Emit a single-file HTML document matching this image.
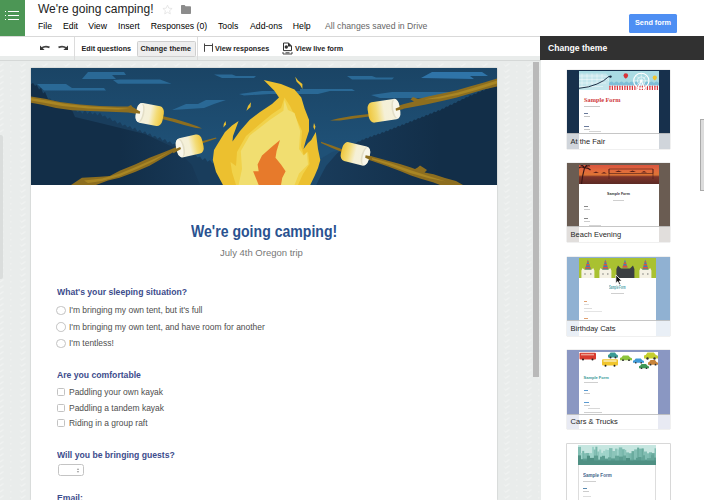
<!DOCTYPE html>
<html lang="en"><head><meta charset="utf-8"><title>We're going camping! - Google Forms</title>
<style>
html,body{margin:0;padding:0}
body{width:704px;height:500px;overflow:hidden;position:relative;background:#fff;font-family:"Liberation Sans",sans-serif}
.a{position:absolute}
.t{position:absolute;white-space:nowrap;line-height:1;transform-origin:0 50%}
.thumb{position:absolute;left:567px;width:102.5px;height:79px;overflow:hidden;box-shadow:0 0 1px rgba(0,0,0,.35)}
.thumb .card{position:absolute;left:11.5px;top:1.5px;width:80px;height:90px;background:#fff}
.thumb .lab{position:absolute;left:0;right:0;bottom:0;height:14.8px;background:rgba(255,255,255,.8);border-top:.5px solid rgba(160,160,160,.6)}
.thumb .ln{position:absolute;height:1px;background:#bbb}
.radio{position:absolute;width:7.6px;height:7.6px;border:.8px solid #c2c2c2;border-radius:50%;background:#fff}
.chk{position:absolute;width:6.2px;height:6.2px;border:.8px solid #c2c2c2;border-radius:1.5px;background:#fff}
</style></head><body>
<div class="a" style="left:0;top:55px;width:541px;height:445px;background:#e9eceb"></div>
<div class="a" style="left:0;top:60px;width:541px;height:1px;background:#d5d8d7"></div>
<svg class="a" style="left:0;top:61px" width="541" height="439"><defs><pattern id="bgp" width="22" height="6" patternUnits="userSpaceOnUse" x="9" y="1"><rect width="22" height="6" fill="#e9eceb"/><path d="M10 1.200 L12.500 3.600 L15 1.600 L17.500 1.400 L15.500 3.200 L12.500 5 Z" fill="#f0f2f1"/><rect x="1" y="3" width="1.600" height="1.600" fill="#eef0ef"/></pattern></defs><rect width="541" height="439" fill="url(#bgp)"/></svg>
<div class="a" style="left:0;top:135px;width:3px;height:144px;background:#dadddc;border-radius:0 2px 2px 0"></div>
<div class="a" style="left:533px;top:62px;width:6px;height:315px;background:#b9b9b9"></div>
<div class="a" style="left:31px;top:68px;width:466px;height:432px;background:#fff;box-shadow:0 0 1.5px rgba(0,0,0,.25)"></div>
<svg class="a" style="left:31px;top:68px" width="466" height="117" viewBox="31 68 466 117" preserveAspectRatio="none">
<defs>
<linearGradient id="sky" x1="0" y1="0" x2="0" y2="1"><stop offset="0" stop-color="#1a4465"/><stop offset=".7" stop-color="#1f5177"/><stop offset="1" stop-color="#1f5177"/></linearGradient>
<linearGradient id="mw" x1="0" y1="0" x2="1" y2="0"><stop offset="0" stop-color="#f4f1de"/><stop offset=".5" stop-color="#f5f0d6"/><stop offset=".74" stop-color="#f3dc78"/><stop offset="1" stop-color="#efc63c"/></linearGradient>
<linearGradient id="mwr" x1="1" y1="0" x2="0" y2="0"><stop offset="0" stop-color="#f4f1de"/><stop offset=".5" stop-color="#f5f0d6"/><stop offset=".74" stop-color="#f3dc78"/><stop offset="1" stop-color="#efc63c"/></linearGradient>
<linearGradient id="rm" gradientUnits="userSpaceOnUse" x1="320" y1="0" x2="440" y2="0"><stop offset="0" stop-color="#193b5a"/><stop offset="1" stop-color="#122e48"/></linearGradient>
<linearGradient id="lm" gradientUnits="userSpaceOnUse" x1="120" y1="0" x2="215" y2="0"><stop offset="0" stop-color="#122e48"/><stop offset="1" stop-color="#193b5a"/></linearGradient>
</defs>
<rect x="31" y="68" width="466" height="117" fill="url(#sky)"/>
<!-- clouds -->
<g fill="#2a6996">
<path d="M82 79 L88 72 H124 L126 75 H112 L116 79 Z"/>
<path d="M113 80 L120 79.500 H160 L171.500 83.700 H118 Z"/>
<path d="M37 84 H66 L72 88 H104 L106 90.500 H44 Z"/>
<path d="M214 74.500 H232 L236 76 H256 L254 78 H222 Z"/>
<path d="M172 110 L186 104 H198 L206 100 H226 L214 104 L204 108 Z"/>
<path d="M239 94 L262 91 H310 L312 94 H270 L244 95.500 Z"/>
<path d="M347 76 H372 L376 77.500 H394 L392 79.500 H352 Z"/>
<path d="M421 78 L432 72 H482 L488 76 H470 L474 79 Z" fill="#2f74a8"/>
<path d="M300 89 H352 L355 91 H330 L318 94 H300 Z"/>
<path d="M371 95 L392 92 H452 L459 95 L440 98 H380 Z"/>
<path d="M140 108 L150 104 H176 L168 108 Z" opacity=".0"/>
</g>
<!-- lighter horizon band under stick (left) -->

<!-- mid mountains left with tree line -->
<path d="M31 84.300 L33 83 L35 86 L36.700 85 L39 89.500 L41 88 L43 93.500 L45 92 L48 99 L50.0 98.2 L52.5 101.4 L55.0 100.0 L57.5 103.5 L60.0 102.2 L62.5 105.6 L65.0 104.3 L67.5 107.9 L70.0 106.6 L72.5 110.2 L75.0 109.3 L77.5 112.3 L80.0 110.7 L82.5 113.7 L85.0 110.1 L87.5 113.9 L90.0 111.3 L92.5 114.5 L95.0 112.3 L97.5 115.6 L100.0 112.6 L102.5 116.6 L105.0 115.5 L107.5 119.0 L110.0 117.5 L112.5 121.3 L115.0 120.2 L117.5 123.7 L120.0 122.1 L122.5 125.7 L125.0 124.5 L127.5 127.6 L130.0 125.9 L132.5 129.5 L135.0 127.5 L137.5 131.4 L140.0 129.7 L142.5 133.2 L145.0 131.3 L147.5 135.1 L150.0 133.3 L152.5 136.9 L155.0 135.7 L157.5 138.8 L160.0 137.0 L162.5 140.7 L165.0 139.1 L167.5 142.7 L170.0 141.3 L172.5 144.6 L175.0 143.6 L177.5 146.6 L180.0 145.5 L182.5 149.3 L185.0 148.6 L187.5 152.0 L190.0 151.0 L192.5 154.8 L195.0 153.6 L197.5 157.5 L200.0 156.5 L202.5 160.2 L205.0 157.9 L207.5 161.8 L210.0 160.0 L212.5 163.4 L215.0 162.0 L217.5 165.8 L220.0 166.5 L222.5 169.9 L226 185 L31 185 Z" fill="#193d5c"/>
<!-- dark front mountain left -->
<path d="M31 84.300 L33 83 L35 86 L36.700 85 L39 89.500 L41 88 L43 93.500 L45 92 L48 99 L72 110 L75 117 L100 123 L145 134 L175 148 L192 165 L200 185 L31 185 Z" fill="url(#lm)"/>
<!-- right dark mountain -->
<path d="M497 85 L494.0 85.2 L492.0 87.4 L490.0 86.9 L488.0 89.1 L486.0 88.5 L484.0 90.7 L482.0 90.1 L480.0 92.3 L478.0 91.7 L476.0 93.9 L474.0 93.4 L472.0 95.6 L470.0 95.0 L468.0 97.2 L466.0 96.9 L464.0 99.1 L462.0 98.9 L460.0 101.1 L458.0 100.8 L456.0 103.0 L454.0 102.7 L452.0 104.9 L450.0 104.6 L448.0 106.8 L446.0 106.6 L444.0 108.8 L442.0 108.5 L440.0 110.7 L438.0 110.1 L436.0 112.3 L434.0 111.6 L432.0 113.8 L430.0 113.2 L428.0 115.4 L426.0 114.8 L424.0 117.0 L422.0 116.4 L420.0 118.6 L418.0 117.9 L416.0 120.1 L414.0 119.5 L412.0 121.7 L410.0 121.1 L408.0 123.3 L406.0 122.7 L404.0 124.9 L402.0 124.3 L400.0 126.5 L398.0 125.8 L396.0 128.0 L394.0 127.4 L392.0 129.6 L390.0 129.0 L388.0 131.2 L386.0 130.6 L384.0 132.8 L382.0 132.1 L380.0 134.2 L378.0 133.4 L376.0 135.6 L374.0 134.8 L372.0 137.0 L370.0 136.2 L368.0 138.4 L366.0 137.7 L364.0 139.8 L362.0 139.4 L360.0 141.6 L358.0 141.3 L356.0 143.5 L354.0 143.1 L352.0 145.3 L350.0 145.0 L348.0 147.2 L346.0 147.0 L344.0 149.2 L342.0 149.0 L340.0 151.2 L340 151 L332 157 L326 165 L320 176 L316 185 L497 185 Z" fill="url(#rm)"/>
<path d="M300 185 L306 170 L322 158 L332 152 L340 150 L326 166 L316 185 Z" fill="#1d4a6e"/>

<!-- stick 1 (upper-left) -->
<path d="M31 96.500 L45 98.800 L60 102 L80 104.500 L100 106 L118 106.500 L128 106.500 L131 105 L132.500 107 L138 110.500 L138 114 L128 112.500 L110 111.800 L90 111 L72 110.200 L56 108 L42 104.800 L31 102.800 Z" fill="#8d6e1f"/>
<path d="M31 98 L48 100.800 L66 104 L90 106.500 L118 108 L130 108.800 L118 109.500 L88 108.500 L62 106 L44 102.800 L31 100.500 Z" fill="#a98624"/>
<path d="M160 115.500 L175 119 L188 123 L198 126.500 L202 128.500 L196 128 L184 125 L172 121.500 L160 118.500 Z" fill="#8d6e1f"/>
<!-- marshmallow 1 -->
<g transform="rotate(11 149.7 114.5)"><rect x="135.9" y="104.5" width="27.5" height="20" rx="5" ry="6.500" fill="url(#mw)"/><ellipse cx="140.9" cy="114.5" rx="3.200" ry="9.2" fill="#d6d0b8" opacity=".55"/><ellipse cx="139.3" cy="114.5" rx="3.200" ry="9.4" fill="#f8f6ea"/></g>

<!-- stick 2 (lower-left) -->
<path d="M71 185 L81.900 177.700 L100 176.800 L109.700 176 L119.600 170.800 L135 164.500 L149.500 157.800 L163 152.500 L175.300 147.500 L181 145.500 L182 148.500 L175.300 151 L163 158 L149.500 165.800 L135 172 L119.600 177.700 L108 180.500 L96 185 Z" fill="#8d6e1f"/>
<path d="M84 180.500 L102 178.500 L120 173.500 L138 166 L154 159 L170 151.500 L154 161 L138 168.500 L120 176 L102 181 L88 183 Z" fill="#a98624"/>
<path d="M201 141.500 L216 137.500 L216.500 138.500 L202 143.500 Z" fill="#8d6e1f"/>
<!-- marshmallow 2 -->
<g transform="rotate(-13 189.6 145.9)"><rect x="176.1" y="136.2" width="27" height="19.5" rx="5" ry="6.500" fill="url(#mw)"/><ellipse cx="181.1" cy="145.9" rx="3.200" ry="8.9" fill="#d6d0b8" opacity=".55"/><ellipse cx="179.5" cy="145.9" rx="3.200" ry="9.2" fill="#f8f6ea"/></g>

<!-- flame -->
<path d="M223 185 L216 172 L212.800 160 L214 150 L217.300 144.400 L225 132 L232 125.500 L238.600 120.900 L236 128 L233 136 L232.500 141.500 L240 131 L249.800 119.800 L260 112 L272 104 L279 97.400 L274.400 90.700 L263.700 80 L281 84 L294.500 89.500 L301.300 97.400 L304.600 108.600 L309 119.800 L309 131 L306 140 L303.500 149 L308 143 L311.300 140 L315.800 132 L318 149 L320.300 160 L318 168 L314.700 175.700 L310.200 185 Z" fill="#ecc02f"/>
<path d="M236 185 L232 172 L230.500 162 L236 166 L237 152 L246 136 L260 124 L272 114 L281 108 L284.500 97.400 L290 106 L296 118 L302 131 L301 146 L304 156 L308 151.500 L309.500 164 L303 174 L298 185 Z" fill="#f1d24a"/>
<path d="M238.600 185 L242 169 L240.800 151 L249.800 135.400 L270 119.800 L283.400 110.800 L284.500 100 L288 110 L294.500 113 L300.200 131 L299 149 L303.500 155.600 L306.900 152.200 L308 164.500 L299 173.500 L294.500 185 Z" fill="#f1de70"/>
<path d="M258.700 185 L253.100 171.300 L258.700 171.300 L257.600 164.500 L262 155.600 L272.200 146.600 L280 140 L276.600 151 L275.500 157.800 L281 164.500 L285.600 171.300 L282.200 178 L281 185 Z" fill="#e77a2b"/>
<!-- sparks -->
<path d="M295.200 76.800 L298 80.500 L302.400 84 L302.400 89 L300 85 L296.500 81.500 Z" fill="#ecc02f"/>
<path d="M250.900 102.300 L250.600 107 L246.400 110.800 L248 106 Z" fill="#ecc02f"/>
<path d="M225.600 120.900 L226 124.500 L223.400 127.600 L223.800 124 Z" fill="#ecc02f"/>
<path d="M314 123 L315.400 126.500 L314.700 130 L313.300 127 Z" fill="#ecc02f"/>

<!-- stick 3 (upper-right) -->
<path d="M497 78.500 L484 82.500 L470.500 86.300 L456 90.500 L442 93.400 L428 96.500 L418 99 L413 97 L410.500 99.500 L414 101.500 L404 104 L396 106.500 L396.500 110 L410 107.500 L426 104.500 L442 101 L456 97.800 L470.500 93.600 L484 89.500 L497 86.500 Z" fill="#8d6e1f"/>
<path d="M497 80.500 L478 86.500 L458 92.500 L440 96.500 L424 99.500 L440 98.500 L458 95 L478 89.500 L497 83.500 Z" fill="#a98624"/>
<path d="M369 114 L352 116 L338 118.500 L330 120.500 L340 120.500 L354 118.500 L369 116.500 Z" fill="#8d6e1f"/>
<!-- marshmallow 3 -->
<g transform="rotate(-9 384 110.7)"><rect x="368.0" y="100.5" width="32" height="20.5" rx="5" ry="6.500" fill="url(#mwr)"/><ellipse cx="395.0" cy="110.7" rx="3.200" ry="9.4" fill="#d6d0b8" opacity=".55"/><ellipse cx="396.6" cy="110.7" rx="3.200" ry="9.7" fill="#f8f6ea"/></g>

<!-- stick 4 (lower-right) -->
<path d="M321 141.800 L332 145.500 L343 149.500 L343 152.500 L332 148 L321 143 Z" fill="#8d6e1f"/>
<path d="M368.900 155.500 L388 160.700 L400 164 L411 167.500 L415 169 L417.700 167.500 L420 165.500 L424 168 L427 170 L424.500 172.500 L433.600 174.300 L445 178 L456 181 L463 185 L440 185 L433.600 182.500 L420 178.500 L411 175.500 L400 171 L388 166.400 L378 163 L368 159.500 Z" fill="#8d6e1f"/>
<path d="M372 158 L390 163 L410 170 L430 176.500 L446 181.500 L430 178.500 L410 173 L390 165.500 L372 159.500 Z" fill="#a98624"/>
<!-- marshmallow 4 -->
<g transform="rotate(14 355.5 153.8)"><rect x="341.2" y="144.1" width="28.5" height="19.5" rx="5" ry="6.500" fill="url(#mwr)"/><ellipse cx="364.8" cy="153.8" rx="3.200" ry="8.9" fill="#d6d0b8" opacity=".55"/><ellipse cx="366.4" cy="153.8" rx="3.200" ry="9.2" fill="#f8f6ea"/></g>
<!-- stick ends over caps -->
<g fill="#8d6e1f">
<path d="M395.600 108.400 L403 105.600 L403.500 109 L396 110.800 Z"/>
<path d="M365.600 155.200 L372 156.600 L371.500 160.400 L365.200 157.800 Z"/>
<path d="M131 106.500 L140.200 111.600 L139.800 113.800 L131 112.500 Z"/>
<path d="M172 150.500 L180.200 146.900 L181 149 L173.500 153.200 Z"/>
</g>
</svg>
<div class="t" style="left:191px;top:223.41px;font-size:17px;color:#2a5290;font-weight:bold;transform:scaleX(0.828);">We're going camping!</div>
<div class="t" style="left:220px;top:248.17px;font-size:9.6px;color:#777;transform:scaleX(0.99);">July 4th Oregon trip</div>
<div class="t" style="left:57px;top:287.46px;font-size:9.5px;color:#3c4c8c;font-weight:bold;transform:scaleX(0.908);">What's your sleeping situation?</div>
<div class="radio" style="left:56.4px;top:305.6px"></div>
<div class="t" style="left:69px;top:306.18px;font-size:9px;color:#4e4e4e;transform:scaleX(0.94);">I'm bringing my own tent, but it's full</div>
<div class="radio" style="left:56.4px;top:322.3px"></div>
<div class="t" style="left:69px;top:323.18px;font-size:9px;color:#4e4e4e;transform:scaleX(0.94);">I'm bringing my own tent, and have room for another</div>
<div class="radio" style="left:56.4px;top:338.5px"></div>
<div class="t" style="left:69px;top:338.58px;font-size:9px;color:#4e4e4e;transform:scaleX(0.94);">I'm tentless!</div>
<div class="t" style="left:57px;top:369.66px;font-size:9.5px;color:#3c4c8c;font-weight:bold;transform:scaleX(0.908);">Are you comfortable</div>
<div class="chk" style="left:56.7px;top:388.0px"></div>
<div class="t" style="left:68.6px;top:388.08px;font-size:9px;color:#4e4e4e;transform:scaleX(0.94);">Paddling your own kayak</div>
<div class="chk" style="left:56.7px;top:404.0px"></div>
<div class="t" style="left:68.6px;top:404.08px;font-size:9px;color:#4e4e4e;transform:scaleX(0.94);">Paddling a tandem kayak</div>
<div class="chk" style="left:56.7px;top:419.2px"></div>
<div class="t" style="left:68.6px;top:419.28px;font-size:9px;color:#4e4e4e;transform:scaleX(0.94);">Riding in a group raft</div>
<div class="t" style="left:57px;top:450.16px;font-size:9.5px;color:#3c4c8c;font-weight:bold;transform:scaleX(0.908);">Will you be bringing guests?</div>
<div class="a" style="left:57.7px;top:464.2px;width:24.6px;height:9.4px;border:.8px solid #c4c4c4;border-radius:2.5px;background:#fff"></div>
<svg class="a" style="left:76px;top:466.6px" width="4" height="7" viewBox="0 0 4 7"><path d="M0.800 2.700 L2 1.300 L3.200 2.700 Z M0.800 4.300 L2 5.700 L3.200 4.300 Z" fill="#8a8a8a"/></svg>
<div class="t" style="left:57px;top:493.46px;font-size:9.5px;color:#3c4c8c;font-weight:bold;transform:scaleX(0.908);">Email:</div>
<div class="a" style="left:0;top:0;width:704px;height:36px;background:#fff"></div>
<div class="a" style="left:0;top:0;width:25px;height:36px;background:#4c9655"></div>
<svg class="a" style="left:4px;top:9px" width="16" height="12" viewBox="0 0 16 12"><g fill="#fff"><rect x="1" y="2" width="1" height="1"/><rect x="4" y="2" width="11" height="1"/><rect x="1" y="6" width="1" height="1"/><rect x="4" y="6" width="11" height="1"/><rect x="1" y="10" width="1" height="1"/><rect x="4" y="10" width="11" height="1"/></g></svg>
<div class="t" style="left:38px;top:3.14px;font-size:12px;color:#222;">We're going camping!</div>
<svg class="a" style="left:162px;top:4px" width="11" height="11" viewBox="0 0 24 24"><path d="M12 2.5l2.9 6.6 7.1.7-5.4 4.8 1.6 7-6.2-3.7-6.2 3.7 1.6-7L2 9.800l7.100-.7z" fill="#fff" stroke="#e2e2e2" stroke-width="1.700"/></svg>
<svg class="a" style="left:181px;top:5px" width="10" height="9" viewBox="0 0 10 9"><path d="M0 0.800 Q0 0 0.800 0 H3.600 L4.600 1.200 H9.200 Q10 1.200 10 2 V8.200 Q10 9 9.200 9 H0.800 Q0 9 0 8.200 Z" fill="#8c8c8c"/></svg>
<div class="t" style="left:38px;top:21.74px;font-size:8.7px;color:#000;">File</div>
<div class="t" style="left:63px;top:21.74px;font-size:8.7px;color:#000;">Edit</div>
<div class="t" style="left:88.3px;top:21.74px;font-size:8.7px;color:#000;">View</div>
<div class="t" style="left:118px;top:21.74px;font-size:8.7px;color:#000;">Insert</div>
<div class="t" style="left:150.7px;top:21.74px;font-size:8.7px;color:#000;">Responses (0)</div>
<div class="t" style="left:218px;top:21.74px;font-size:8.7px;color:#000;">Tools</div>
<div class="t" style="left:250px;top:21.74px;font-size:8.7px;color:#000;">Add-ons</div>
<div class="t" style="left:292.8px;top:21.74px;font-size:8.7px;color:#000;">Help</div>
<div class="t" style="left:325px;top:21.74px;font-size:8.7px;color:#666;">All changes saved in Drive</div>
<div class="a" style="left:629px;top:14px;width:47.5px;height:18.5px;background:#4e8ff3;border-radius:1.5px"></div>
<div class="t" style="left:635px;top:19.42px;font-size:7.3px;color:#fff;font-weight:bold;">Send form</div>
<div class="a" style="left:0;top:36px;width:541px;height:1px;background:#d9d9d9"></div>
<div class="a" style="left:0;top:37px;width:541px;height:18.5px;background:#fff"></div>
<div class="a" style="left:74px;top:37px;width:1px;height:23px;background:#dcdcdc"></div>
<div class="a" style="left:197px;top:37px;width:1px;height:23px;background:#dcdcdc"></div>
<svg class="a" style="left:38px;top:44px" width="32" height="8" viewBox="0 0 32 8"><path d="M2 1.600 V6 H6.600 Z" fill="#333"/><path d="M3.500 4.200 Q7 1.400 11.500 3.400" fill="none" stroke="#444" stroke-width="1.700"/><path d="M30 1.600 V6 H25.400 Z" fill="#333"/><path d="M28.500 4.200 Q25 1.400 20.500 3.400" fill="none" stroke="#444" stroke-width="1.700"/></svg>
<div class="t" style="left:81.5px;top:44.51px;font-size:7.2px;color:#222;font-weight:bold;">Edit questions</div>
<div class="a" style="left:137px;top:40.5px;width:56.5px;height:14.2px;background:#eee;border:.8px solid #cfcfcf;border-radius:1.5px"></div>
<div class="t" style="left:140.5px;top:44.51px;font-size:7.2px;color:#222;font-weight:bold;letter-spacing:.08px;">Change theme</div>
<svg class="a" style="left:203px;top:43px" width="11" height="10" viewBox="0 0 11 10"><path d="M1.500 0.500 V8.800 M9.500 0.500 V8.800 M1.500 2.500 H9.500" fill="none" stroke="#444" stroke-width="1"/></svg>
<div class="t" style="left:215px;top:44.51px;font-size:7.2px;color:#222;font-weight:bold;">View responses</div>
<svg class="a" style="left:282px;top:41.5px" width="11" height="13" viewBox="0 0 11 13"><path d="M1.500 1 H6.500 L9.500 4 V8.600 H1.500 Z" fill="#fff" stroke="#333" stroke-width="1"/><path d="M6 0.500 L10 4.500 H6 Z" fill="#333"/><circle cx="4.300" cy="5" r="1.700" fill="#333"/><path d="M1 10 V12 H10 V10" fill="none" stroke="#333" stroke-width=".9"/><rect x="3.500" y="10.200" width="4" height="1.200" fill="#555"/></svg>
<div class="t" style="left:295px;top:44.51px;font-size:7.2px;color:#222;font-weight:bold;">View live form</div>
<div class="a" style="left:540.500px;top:36px;width:163.500px;height:464px;background:#fff"></div>
<div class="a" style="left:540px;top:36px;width:164px;height:23.600px;background:#313131"></div>
<div class="t" style="left:548px;top:43.72px;font-size:8.6px;color:#fff;font-weight:bold;">Change theme</div>
<div class="a" style="left:700px;top:119px;width:4px;height:71.500px;background:#dcdcdc;border:.6px solid #aaa;border-right:0;box-sizing:border-box"></div>
<div class="thumb" style="top:69.6px;background:#17304c">
<div class="card" style="top:1.4px"></div>
<svg class="a" style="left:11.5px;top:1.4px" width="80" height="19.5" viewBox="0 0 80 19.500">
<rect width="80" height="19.500" fill="#a9dbe3"/>
<path d="M0 2.500 H27 L30 5.500 V19.500 H0 Z" fill="#fff" opacity=".32"/>
<g fill="none" stroke="#fff" stroke-width=".5" opacity=".85"><path d="M0 5 H24 Q29.500 5 29.500 10 M3 2.500 V17 M8 2.500 V17 M13 2.500 V16 M18 2.500 V14 M23 3 V12 M0 8.500 H28 M0 12 H27 M0 15.500 H24"/></g>
<path d="M0 17.300 Q10 16.500 18 13 Q26 9.500 28.500 6.500 Q30 4.500 31.500 6" fill="none" stroke="#1d2f45" stroke-width="1"/>
<circle cx="31.500" cy="5.600" r="1.200" fill="#1d2f45"/>
<path d="M30 12 q2.500 -3 5 0 q2.500 -3 5 0 q2.500 -3 5 0 q2.500 -3 5 0 q2.500 -3 5 0 q2.500 -3 5 0 q2.500 -3 5 0 q2.500 -3 5 0 q2.500 -3 5 0 q2.500 -3 5 0 V15 H30 Z" fill="#7fbfd8"/>
<rect x="30" y="14.500" width="50" height="5" fill="#fff"/>
<g fill="#d8343a"><path d="M30.3 19.500 V15.200 L30.9 14.200 L31.5 15.200 V19.500 Z"/><path d="M32.8 19.500 V15.200 L33.4 14.200 L34.0 15.200 V19.500 Z"/><path d="M35.3 19.500 V15.200 L35.9 14.200 L36.5 15.200 V19.500 Z"/><path d="M37.8 19.500 V15.200 L38.4 14.200 L39.0 15.200 V19.500 Z"/><path d="M40.3 19.500 V15.200 L40.9 14.200 L41.5 15.200 V19.500 Z"/><path d="M42.8 19.500 V15.200 L43.4 14.200 L44.0 15.200 V19.500 Z"/><path d="M45.3 19.500 V15.200 L45.9 14.200 L46.5 15.200 V19.500 Z"/><path d="M47.8 19.500 V15.200 L48.4 14.200 L49.0 15.200 V19.500 Z"/><path d="M50.3 19.500 V15.200 L50.9 14.200 L51.5 15.200 V19.500 Z"/><path d="M52.8 19.500 V15.200 L53.4 14.200 L54.0 15.200 V19.500 Z"/><path d="M55.3 19.500 V15.200 L55.9 14.200 L56.5 15.200 V19.500 Z"/><path d="M57.8 19.500 V15.200 L58.4 14.200 L59.0 15.200 V19.500 Z"/><path d="M60.3 19.500 V15.200 L60.9 14.200 L61.5 15.200 V19.500 Z"/><path d="M62.8 19.500 V15.200 L63.4 14.200 L64.0 15.200 V19.500 Z"/><path d="M65.3 19.500 V15.200 L65.9 14.200 L66.5 15.200 V19.500 Z"/><path d="M67.8 19.500 V15.200 L68.4 14.200 L69.0 15.200 V19.500 Z"/><path d="M70.3 19.500 V15.200 L70.9 14.200 L71.5 15.200 V19.500 Z"/><path d="M72.8 19.500 V15.200 L73.4 14.200 L74.0 15.200 V19.500 Z"/><path d="M75.3 19.500 V15.200 L75.9 14.200 L76.5 15.200 V19.500 Z"/><path d="M77.8 19.500 V15.200 L78.4 14.200 L79.0 15.200 V19.500 Z"/></g>
<g fill="none" stroke="#fff"><circle cx="62.300" cy="9.800" r="7.600" stroke-width="1.100"/><circle cx="62.300" cy="9.800" r="4" stroke-width=".6"/><path d="M54.700 9.800 H69.900 M62.300 2.200 V17.400 M56.900 4.400 L67.700 15.200 M67.700 4.400 L56.900 15.200" stroke-width=".45"/><path d="M62.300 9.800 L58 19.500 M62.300 9.800 L66.600 19.500" stroke-width="1.100"/></g><circle cx="62.300" cy="9.800" r="1.300" fill="#fff"/>
<path d="M44.500 4.500 a2.300 2.300 0 1 1 4.600 0 q0 1.800 -2.300 3.200 q-2.300 -1.400 -2.300 -3.200 Z" fill="#d8343a"/><path d="M73.700 6.500 a2.100 2.100 0 1 1 4.200 0 q0 1.700 -2.100 3 q-2.100 -1.300 -2.100 -3 Z" fill="#efc52f"/>
</svg>
<div class="t" style="left:17px;top:26.97px;font-size:6.3px;font-weight:bold;color:#cf3a3c;font-family:'Liberation Serif',serif">Sample Form</div>
<div class="ln" style="left:17px;top:36px;width:16px;background:#c8c8c8"></div><div class="ln" style="left:17px;top:43.5px;width:4px;background:#6a7a9a"></div><div class="ln" style="left:17px;top:46.5px;width:6px;background:#c4c4c4"></div><div class="ln" style="left:17px;top:56px;width:5px;background:#6a7a9a"></div><div class="ln" style="left:17px;top:59px;width:6px;background:#c4c4c4"></div><div class="ln" style="left:22px;top:61.5px;width:12px;background:#d4d4d4"></div>
<div class="lab"></div><div class="t" style="left:3.6px;top:68.05px;font-size:7.5px;color:#262626">At the Fair</div>
</div>
<div class="thumb" style="top:163px;background:#6a5c52">
<div class="card" style="top:1.5px"></div>
<svg class="a" style="left:11.5px;top:1.5px" width="80" height="19" viewBox="0 0 80 19">
<defs><linearGradient id="be" x1="0" y1="0" x2="0" y2="1"><stop offset="0" stop-color="#d9553f"/><stop offset=".3" stop-color="#e26a3c"/><stop offset=".52" stop-color="#dc7434"/><stop offset=".62" stop-color="#7c3329"/><stop offset="1" stop-color="#5c2a25"/></linearGradient></defs>
<rect width="80" height="19" fill="url(#be)"/>

<g stroke="#4a1c18" stroke-width=".6" fill="none"><path d="M30 4 H74 V8.500 H30 Z M30 4 V14 M74 4 V14"/></g>
<path d="M2.500 19 Q3.500 10 5.500 3 M5.500 3 Q2 1 0 3 M5.500 3 Q4 0 1.500 0 M5.500 3 Q8 0 11 1 M5.500 3 Q9 2.500 11.500 5 M5.500 3 Q6.500 1 8 0" stroke="#3a1614" stroke-width="1.100" fill="none"/>
<g fill="#5e211a"><path d="M14 8 l3 -1.500 l3 1.500 Z M22 8.500 l3 -1.500 l3 1.500 Z M36 7 l3.500 -1.500 l3.500 1.500 Z M50 7 l3.500 -1.500 l3.500 1.500 Z M62 7.500 l3 -1.500 l3 1.500 Z"/></g>
</svg>
<div class="t" style="left:11.5px;width:80px;text-align:center;top:29.95px;font-size:3.6px;font-weight:bold;color:#333">Sample Form</div>
<div class="ln" style="left:46px;top:36.5px;width:11px;background:#cfcfcf"></div><div class="ln" style="left:17px;top:42.5px;width:4px;background:#888"></div><div class="ln" style="left:17px;top:45.5px;width:6px;background:#ccc"></div><div class="ln" style="left:17px;top:55px;width:4px;background:#888"></div><div class="ln" style="left:17px;top:58px;width:6px;background:#ccc"></div><div class="ln" style="left:22px;top:61.5px;width:12px;background:#d4d4d4"></div>
<div class="lab"></div><div class="t" style="left:3.6px;top:68.05px;font-size:7.5px;color:#262626">Beach Evening</div>
</div>
<div class="thumb" style="top:257px;background:#90b1d2">
<div class="card" style="top:1px;left:11.600px;width:77.700px"></div>
<svg class="a" style="left:11.600px;top:1px" width="77.700" height="20" viewBox="0 0 77.700 20">
<rect width="77.700" height="20" fill="#a9c131"/>
<path d="M2.4 20 V12.500 L3.5999999999999996 10 L5.4 11.800 H12.4 L14.200000000000001 10 L15.4 12.500 V20 Z" fill="#f4f1e4"/><path d="M5.9 11.500 L8.9 1.500 L11.9 11.500 Z" fill="#3f7fb8"/><path d="M6.6000000000000005 9 H11.2 L11.7 10.600 H6.1000000000000005 Z M7.4 6 H10.4 L10.8 7.500 H7.0 Z M8.200000000000001 3.300 H9.6 L9.9 4.500 H7.9 Z" fill="#e2543a"/><rect x="5.4" y="15.500" width="1.200" height="1" fill="#555"/><rect x="11.2" y="15.500" width="1.200" height="1" fill="#555"/><path d="M20.4 20 V12.500 L21.599999999999998 10 L23.4 11.800 H29.4 L31.2 10 L32.4 12.500 V20 Z" fill="#f4f1e4"/><path d="M23.4 11.500 L26.4 1.500 L29.4 11.500 Z" fill="#3f7fb8"/><path d="M24.099999999999998 9 H28.7 L29.2 10.600 H23.599999999999998 Z M24.9 6 H27.9 L28.299999999999997 7.500 H24.5 Z M25.7 3.300 H27.099999999999998 L27.4 4.500 H25.4 Z" fill="#e2543a"/><rect x="23.4" y="15.500" width="1.200" height="1" fill="#555"/><rect x="28.2" y="15.500" width="1.200" height="1" fill="#555"/><path d="M60.4 20 V12.500 L61.6 10 L63.4 11.800 H69.4 L71.2 10 L72.4 12.500 V20 Z" fill="#f4f1e4"/><path d="M63.400000000000006 11.500 L66.4 1.500 L69.4 11.500 Z" fill="#3f7fb8"/><path d="M64.10000000000001 9 H68.7 L69.2 10.600 H63.60000000000001 Z M64.9 6 H67.9 L68.30000000000001 7.500 H64.5 Z M65.7 3.300 H67.10000000000001 L67.4 4.500 H65.4 Z" fill="#e2543a"/><rect x="63.4" y="15.500" width="1.200" height="1" fill="#555"/><rect x="68.2" y="15.500" width="1.200" height="1" fill="#555"/>
<path d="M37.400 20 V11 L39 7.500 L42 10.500 H51 L54 7.500 L55.400 11 V20 Z" fill="#3b3f42"/>
<path d="M43.500 9.500 L46 1.500 L48.500 9.500 Z" fill="#3f7fb8"/><path d="M44 7.500 H48 L48.500 9.500 H43.500 Z M45 4.500 H47 L47.400 6 H44.600 Z" fill="#e2543a"/>
</svg>
<div class="t" style="left:41.500px;top:28.06px;font-size:5.600px;color:#4aa0a8;transform:scaleX(.47);font-weight:bold">Sample Form</div>
<div class="ln" style="left:43.5px;top:35.5px;width:13px;background:#cfcfcf"></div><div class="ln" style="left:17px;top:44px;width:3px;background:#e0a070"></div><div class="ln" style="left:17px;top:47px;width:5px;background:#ddd"></div><div class="ln" style="left:17px;top:50.5px;width:8px;background:#ddd"></div><div class="ln" style="left:17px;top:54px;width:18px;background:#e4e4e4"></div><div class="ln" style="left:17px;top:61px;width:4px;background:#e0a070"></div>
<div class="lab"></div><div class="t" style="left:3.6px;top:68.05px;font-size:7.5px;color:#262626">Birthday Cats</div>
</div>
<div class="thumb" style="top:350.300px;background:#8a97c2">
<div class="card" style="top:1.500px;left:11.700px;width:79px"></div>
<svg class="a" style="left:11.700px;top:1.500px" width="79" height="17" viewBox="0 0 79 17">
<rect x="0.500" y="0.800" width="16.500" height="6.600" rx="1" fill="#d83a2e"/><circle cx="4" cy="7.600" r="1" fill="#222"/><circle cx="13.500" cy="7.600" r="1" fill="#222"/><rect x="2" y="1.800" width="13" height="1.600" fill="#f4c8b8" opacity=".7"/>
<rect x="23" y="7.200" width="16" height="6.400" rx="1" fill="#f0c52d"/><circle cx="26.500" cy="13.800" r="1" fill="#222"/><circle cx="35.500" cy="13.800" r="1" fill="#222"/><rect x="24.500" y="8.200" width="13" height="1.600" fill="#fff" opacity=".6"/>
<path d="M29 3.2 Q29 2.5999999999999996 30.2 2.5999999999999996 L31.5 0.5 H36.0 L37.5 2.5999999999999996 Q39 2.9000000000000004 39 3.8000000000000003 V5.6 H29 Z" fill="#3a9a94"/><circle cx="31.5" cy="5.6" r="1.02" fill="#333"/><circle cx="36.5" cy="5.6" r="1.02" fill="#333"/><path d="M41 5.975 Q41 5.425 42.44 5.425 L44.0 3.5 H49.4 L51.2 5.425 Q53 5.7 53 6.525 V8.175 H41 Z" fill="#8cc43c"/><circle cx="44.0" cy="8.175" r="0.935" fill="#333"/><circle cx="50.0" cy="8.175" r="0.935" fill="#333"/><path d="M54 8.75 Q54 8.25 55.32 8.25 L56.75 6.5 H61.7 L63.35 8.25 Q65 8.5 65 9.25 V10.75 H54 Z" fill="#3e9ad6"/><circle cx="56.75" cy="10.75" r="0.8500000000000001" fill="#333"/><circle cx="62.25" cy="10.75" r="0.8500000000000001" fill="#333"/><path d="M65 3.65 Q65 2.9499999999999997 66.68 2.9499999999999997 L68.5 0.5 H74.8 L76.9 2.9499999999999997 Q79 3.3000000000000003 79 4.3500000000000005 V6.45 H65 Z" fill="#c5cf2e"/><circle cx="68.5" cy="6.45" r="1.1900000000000002" fill="#333"/><circle cx="75.5" cy="6.45" r="1.1900000000000002" fill="#333"/><path d="M69 10.475 Q69 9.925 70.2 9.925 L71.5 8 H76.0 L77.5 9.925 Q79 10.2 79 11.025 V12.675 H69 Z" fill="#c8843a"/><circle cx="71.5" cy="12.675" r="0.935" fill="#333"/><circle cx="76.5" cy="12.675" r="0.935" fill="#333"/><path d="M60 14.25 Q60 13.75 61.2 13.75 L62.5 12 H67.0 L68.5 13.75 Q70 14.0 70 14.75 V16.25 H60 Z" fill="#3f9a56"/><circle cx="62.5" cy="16.25" r="0.8500000000000001" fill="#333"/><circle cx="67.5" cy="16.25" r="0.8500000000000001" fill="#333"/>
</svg>
<div class="t" style="left:16.500px;top:25.21px;font-size:4px;font-weight:bold;color:#3a9a9a">Sample Form</div>
<div class="ln" style="left:16.5px;top:32px;width:14px;background:#cfcfcf"></div><div class="ln" style="left:16.5px;top:39.5px;width:4px;background:#5a9ad0"></div><div class="ln" style="left:16.5px;top:42.5px;width:6px;background:#ccc"></div><div class="ln" style="left:16.5px;top:51.5px;width:5px;background:#5a9ad0"></div><div class="ln" style="left:16.5px;top:54.5px;width:6px;background:#ccc"></div><div class="ln" style="left:21px;top:57.5px;width:12px;background:#d8d8d8"></div><div class="ln" style="left:17px;top:62px;width:18px;background:#d0d0d0"></div>
<div class="lab"></div><div class="t" style="left:3.6px;top:68.05px;font-size:7.5px;color:#262626">Cars &amp; Trucks</div>
</div>
<div class="thumb" style="top:443.500px;background:#fff;box-shadow:0 0 0 .7px #c8c8c8">
<svg class="a" style="left:11.300px;top:1.500px" width="77.800" height="20" viewBox="0 0 77.800 20">
<rect width="78.500" height="20" fill="#c6e6e0"/><rect x="0.0" y="1.9" width="3" height="18.1" fill="#82beb3"/><rect x="2.5" y="8.0" width="2" height="12.0" fill="#9ed3c9"/><rect x="4.2" y="5.9" width="2" height="14.1" fill="#79b8ac"/><rect x="6.0" y="8.2" width="2.5" height="11.8" fill="#82beb3"/><rect x="8.1" y="8.0" width="3.5" height="12.0" fill="#79b8ac"/><rect x="11.0" y="8.1" width="3.5" height="11.9" fill="#9ed3c9"/><rect x="14.0" y="1.9" width="2" height="18.1" fill="#9ed3c9"/><rect x="15.7" y="4.5" width="2" height="15.5" fill="#82beb3"/><rect x="17.4" y="1.7" width="2" height="18.3" fill="#79b8ac"/><rect x="19.1" y="6.5" width="2.5" height="13.5" fill="#8cc5ba"/><rect x="21.2" y="4.5" width="2" height="15.5" fill="#9ed3c9"/><rect x="22.9" y="7.8" width="2.5" height="12.2" fill="#9ed3c9"/><rect x="25.1" y="5.9" width="2.5" height="14.1" fill="#9ed3c9"/><rect x="27.2" y="4.5" width="2" height="15.5" fill="#9ed3c9"/><rect x="28.9" y="5.0" width="2.5" height="15.0" fill="#9ed3c9"/><rect x="31.0" y="3.1" width="3.5" height="16.9" fill="#82beb3"/><rect x="34.0" y="6.0" width="3.5" height="14.0" fill="#8cc5ba"/><rect x="37.0" y="3.6" width="2.5" height="16.4" fill="#8cc5ba"/><rect x="39.1" y="4.5" width="2" height="15.5" fill="#9ed3c9"/><rect x="40.8" y="2.4" width="3.5" height="17.6" fill="#82beb3"/><rect x="43.8" y="4.2" width="3" height="15.8" fill="#79b8ac"/><rect x="46.3" y="4.9" width="2" height="15.1" fill="#8cc5ba"/><rect x="48.0" y="7.4" width="3" height="12.6" fill="#82beb3"/><rect x="50.6" y="8.2" width="3.5" height="11.8" fill="#79b8ac"/><rect x="53.5" y="6.1" width="3" height="13.9" fill="#6aab9e"/><rect x="56.1" y="4.4" width="3.5" height="15.6" fill="#82beb3"/><rect x="59.1" y="2.6" width="2" height="17.4" fill="#6aab9e"/><rect x="60.8" y="3.6" width="3.5" height="16.4" fill="#79b8ac"/><rect x="63.8" y="3.4" width="2" height="16.6" fill="#6aab9e"/><rect x="65.5" y="6.5" width="3.5" height="13.5" fill="#82beb3"/><rect x="68.4" y="8.3" width="3" height="11.7" fill="#82beb3"/><rect x="71.0" y="7.3" width="3" height="12.7" fill="#79b8ac"/><rect x="73.5" y="8.1" width="3.5" height="11.9" fill="#6aab9e"/><rect x="76.5" y="3.3" width="2.5" height="16.7" fill="#82beb3"/><rect x="0.0" y="10.4" width="3" height="9.6" fill="#4f9083"/><rect x="3.0" y="14.2" width="2" height="5.8" fill="#4f9083"/><rect x="5.0" y="13.6" width="4" height="6.4" fill="#5b9d90"/><rect x="9.0" y="10.7" width="3" height="9.3" fill="#4f9083"/><rect x="12.0" y="12.9" width="4" height="7.1" fill="#4f9083"/><rect x="16.0" y="10.6" width="4" height="9.4" fill="#5b9d90"/><rect x="20.0" y="14.6" width="2" height="5.4" fill="#5b9d90"/><rect x="22.0" y="11.7" width="2" height="8.3" fill="#5b9d90"/><rect x="24.0" y="10.8" width="3" height="9.2" fill="#5b9d90"/><rect x="27.0" y="13.6" width="3" height="6.4" fill="#5b9d90"/><rect x="30.0" y="12.3" width="3" height="7.7" fill="#64a598"/><rect x="33.0" y="13.4" width="4" height="6.6" fill="#5b9d90"/><rect x="37.0" y="10.7" width="4" height="9.3" fill="#64a598"/><rect x="41.0" y="11.6" width="4" height="8.4" fill="#5b9d90"/><rect x="45.0" y="10.5" width="3" height="9.5" fill="#64a598"/><rect x="48.0" y="13.0" width="4" height="7.0" fill="#4f9083"/><rect x="52.0" y="14.5" width="3" height="5.5" fill="#64a598"/><rect x="55.0" y="14.7" width="3" height="5.3" fill="#5b9d90"/><rect x="58.0" y="12.8" width="2" height="7.2" fill="#5b9d90"/><rect x="60.0" y="12.0" width="3" height="8.0" fill="#5b9d90"/><rect x="63.0" y="12.2" width="2" height="7.8" fill="#64a598"/><rect x="65.0" y="10.3" width="2" height="9.7" fill="#64a598"/><rect x="67.0" y="14.6" width="2" height="5.4" fill="#5b9d90"/><rect x="69.0" y="13.1" width="4" height="6.9" fill="#64a598"/><rect x="73.0" y="10.2" width="3" height="9.8" fill="#64a598"/><rect x="76.0" y="12.6" width="3" height="7.4" fill="#5b9d90"/><rect y="15.500" width="78.500" height="4.500" fill="#4f9083"/>
</svg>
<div class="a" style="left:11.300px;top:21px;width:77.800px;height:60px;box-sizing:border-box;border-left:.5px solid #ddd;border-right:.5px solid #ddd"></div>
<div class="t" style="left:16.400px;top:29.03px;font-size:5.400px;font-weight:bold;color:#43648a;transform:scaleX(.84)">Sample Form</div>
<div class="ln" style="left:16.4px;top:37px;width:13px;background:#cfcfcf"></div><div class="ln" style="left:16.4px;top:44.5px;width:4px;background:#5a8ab0"></div><div class="ln" style="left:16.4px;top:47.5px;width:6px;background:#ccc"></div><div class="ln" style="left:16.4px;top:52px;width:8px;background:#ddd"></div>
</div>
<svg class="a" style="left:615.4px;top:273.9px" width="7.65" height="11.9" viewBox="0 0 9 14"><path d="M1 1 V11 L3.300 8.800 L5 12.600 L6.600 11.900 L5 8.200 H8.200 Z" fill="#111" stroke="#fff" stroke-width=".9"/></svg>
</body></html>
